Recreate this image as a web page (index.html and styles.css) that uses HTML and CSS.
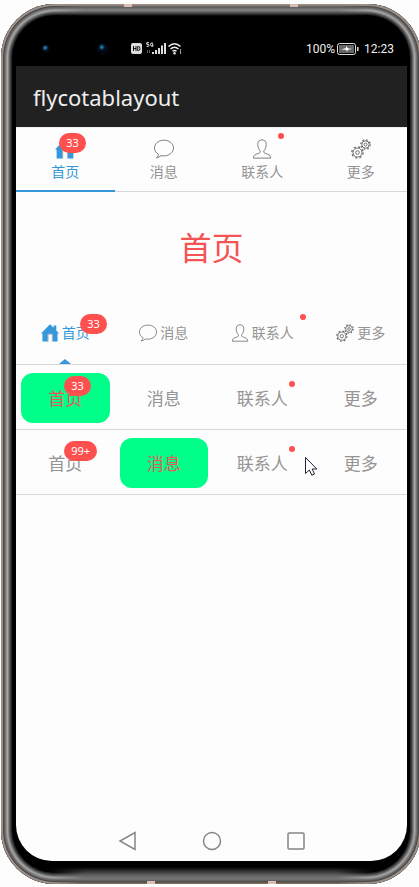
FILE: index.html
```html
<!DOCTYPE html>
<html lang="zh-CN">
<head>
<meta charset="utf-8">
<meta name="viewport" content="width=device-width, initial-scale=1">
<title>flycotablayout</title>
<link rel="stylesheet" href="styles.css">
</head>
<body>
<svg class="defs" aria-hidden="true">
  <symbol id="home" viewBox="0 0 20 20"><path fill="currentColor" d="M10 .3 14 4.300V1.800h3v5.500L20 10.500H18.400V19.500H12.600V11.500H8V19.500H1.600V10.500H0z"/><path fill="none" stroke="#a9b5bd" d="M7.700 19.500v-8.300h4.900v8.300"/></symbol>
  <symbol id="chat" viewBox="0 0 20 20"><path fill="none" stroke="currentColor" stroke-width=".9" d="M4.500 15.200C1.800 13.800.5 11.600.5 9c0-4.300 4-7.800 9.300-7.800s9.700 3.300 9.700 7.700-4.300 8-9.700 8c-1 0-1.900-.1-2.800-.3-1.200 1.200-2.800 2-4.600 2.200 1.200-.9 2-2.100 2.100-3.600z"/></symbol>
  <symbol id="person" viewBox="0 0 20 20"><path fill="none" stroke="currentColor" stroke-width=".9" d="M10 .9c-3 0-4.300 1.800-4.200 4.500.1 3 1 5.200 2.400 6.500.3 1.500-.3 2-1.600 2.500-3.100 1-5.100 1.500-5.200 4.700h17.200c-.1-3.200-2.100-3.700-5.200-4.700-1.300-.5-1.900-1-1.600-2.500 1.400-1.300 2.300-3.500 2.400-6.500C14.300 2.700 13 .9 10 .9z"/></symbol>
  <symbol id="gears" viewBox="0 0 20 20"><g fill="none" stroke="currentColor"><circle cx="6.500" cy="13.500" r="4.500"/><circle cx="6.500" cy="13.500" r="1.800"/><circle cx="6.500" cy="13.500" r="5.600" stroke-width="1.500" stroke-dasharray="2 2.400"/><circle cx="14.500" cy="5.500" r="3.700"/><circle cx="14.500" cy="5.500" r="1.500"/><circle cx="14.500" cy="5.500" r="4.700" stroke-width="1.400" stroke-dasharray="1.700 2"/></g></symbol>
</svg>
<div class="phone">
  <span class="seam seam-a"></span><span class="seam seam-b"></span><span class="seam seam-c"></span><span class="seam seam-d"></span>
  <header class="status">
    <span class="lens"></span><span class="lens lens-big"></span>
    <svg class="signals" width="52" height="14" viewBox="0 0 52 14" role="img" aria-label="HD 5G Wi-Fi">
      <rect y="1" width="11" height="11" rx="2" fill="#ddd"/>
      <path d="M2.500 4v5m2.500-5v5m-2.500-2.500h2.500M6.700 4.500v4h1q1.300 0 1.300-2t-1.300-2z" fill="none" stroke="#111"/>
      <path d="M18 .7h-2.200v1.700h1.200q1 0 1 1t-1 1h-1.300M22 1.200q-2.500-1-2.500 1.300T22 4.200V2.700h-1" fill="none" stroke="#eee"/>
      <path d="M16.500 8v3m2-3v3" stroke="#777" stroke-width=".8"/>
      <path d="M22 12v-2M25 12V8M28 12V6M31 12V3.500M34 12V1" stroke="#ddd" stroke-width="2"/>
      <path d="M37.500 4.500q6-5.500 12 0M39.500 7q4-3.500 8 0M41.500 9.300q2-1.700 4 0" fill="none" stroke="#eee" stroke-width="1.500"/><circle cx="43.500" cy="11.200" r="1.200" fill="#eee"/><path d="M49.500 7v5" stroke="#999"/>
    </svg>
    <span class="power">100%</span>
    <svg class="battery" width="22" height="12" viewBox="0 0 22 12" role="img" aria-label="充电中"><rect x=".5" y=".5" width="18" height="11" rx="2" fill="none" stroke="#ddd"/><rect x="2" y="2" width="15" height="8" fill="#666"/><path d="M4 6.500 9 5V3l2 2.200L15 6l-4 .8-1 2-1-2z" fill="#fff"/><path d="M20.800 4v4" stroke="#ddd" stroke-width="1.500"/></svg>
    <time>12:23</time>
  </header>
  <div class="screen">
    <h1 class="appbar">flycotablayout</h1>
    <div class="tabs stacked" role="tablist">
      <button class="tab active" role="tab" aria-selected="true"><svg><use href="#home"/></svg>首页<span class="badge">33</span></button>
      <button class="tab" role="tab"><svg><use href="#chat"/></svg>消息</button>
      <button class="tab" role="tab"><svg><use href="#person"/></svg>联系人<span class="dot"></span></button>
      <button class="tab" role="tab"><svg><use href="#gears"/></svg>更多</button>
    </div>
    <main class="page">首页</main>
    <div class="tabs inline" role="tablist">
      <button class="tab active" role="tab" aria-selected="true"><svg><use href="#home"/></svg>首页<span class="badge">33</span></button>
      <button class="tab" role="tab"><svg><use href="#chat"/></svg>消息</button>
      <button class="tab" role="tab"><svg><use href="#person"/></svg>联系人<span class="dot"></span></button>
      <button class="tab" role="tab"><svg><use href="#gears"/></svg>更多</button>
    </div>
    <div class="tabs block" role="tablist">
      <button class="tab active" role="tab" aria-selected="true"><span class="pill">首页</span><span class="badge">33</span></button>
      <button class="tab" role="tab"><span class="pill">消息</span></button>
      <button class="tab" role="tab"><span class="pill">联系人</span><span class="dot"></span></button>
      <button class="tab" role="tab"><span class="pill">更多</span></button>
    </div>
    <div class="tabs block" role="tablist">
      <button class="tab" role="tab"><span class="pill">首页</span><span class="badge">99+</span></button>
      <button class="tab active" role="tab" aria-selected="true"><span class="pill">消息</span></button>
      <button class="tab" role="tab"><span class="pill">联系人</span><span class="dot"></span></button>
      <button class="tab" role="tab"><span class="pill">更多</span></button>
      <svg class="cursor" width="14" height="21" viewBox="0 0 14 21" aria-hidden="true"><path d="M1.500 1.500v16l3.800-3.500 2.500 5.200 2.700-1.200L8.200 13h4.600z" fill="#fff" stroke="#223"/></svg>
    </div>
    <nav class="system">
      <button aria-label="返回"><svg viewBox="0 0 20 20"><path d="M17 1.500v17L2 10z"/></svg></button>
      <button aria-label="主页"><svg viewBox="0 0 20 20"><circle cx="10" cy="10" r="8.500"/></svg></button>
      <button aria-label="最近任务"><svg viewBox="0 0 20 20"><rect x="2" y="2" width="16" height="16" rx="1"/></svg></button>
    </nav>
  </div>
</div>
</body>
</html>
```
FILE: styles.css
```css
* { box-sizing: border-box; }
body {
  margin: 0;
  min-height: 100vh;
  padding: 4px 0 3px 1px;
  display: flex;
  overflow: hidden;
  background: #fdfdfd;
  font-family: "Noto Sans", "Noto Sans CJK SC", sans-serif;
  color: #949494;
}
button {
  margin: 0;
  padding: 0;
  border: 0;
  background: none;
  color: inherit;
  font: inherit;
}
.defs { position: absolute; width: 0; height: 0; }

.phone {
  position: relative;
  flex: 1;
  min-width: 0;
  margin-right: -2px;
  display: flex;
  flex-direction: column;
  padding: 11px 14px 23px 15px;
  border-radius: 54px;
  background: #000;
  box-shadow:
    inset 0 0 0 2px #9b8f88,
    inset 0 0 0 3px #484848,
    inset 0 0 0 4px #606060,
    inset 0 0 0 5px #747474,
    inset 0 0 0 6px #909090,
    inset 0 0 0 7px #a8a8a8,
    inset 0 0 0 8px #848484,
    inset 0 0 0 9px #606060,
    inset 0 0 0 10px #404040,
    inset 0 0 0 11px #242424;
}
.phone::before {
  content: "";
  position: absolute;
  inset: 0;
  border-radius: inherit;
  background:
    linear-gradient(#9b8d86 1px, #5a5a5a 3px, #858585 6px, #4b4b4b 9px, #000 12px) top / 100% 12px no-repeat,
    linear-gradient(#000, #303030 4px, #606060 8px, #777 12px, #4c4c4c 15px, #94765f 17px) bottom / 100% 17px no-repeat;
  mask-image: linear-gradient(90deg, transparent 48px, #000 84px, #000 calc(100% - 84px), transparent calc(100% - 48px));
}
.seam { position: absolute; width: 8px; height: 3px; background: #d8beb0; }
.seam-a { top: 0; left: 123px; }
.seam-b { top: 0; right: 123px; }
.seam-c { bottom: 0; left: 146px; }
.seam-d { bottom: 0; right: 145px; }

.status {
  position: relative;
  height: 51px;
  padding: 16px 13px 0 26px;
  display: flex;
  align-items: center;
  color: #eee;
  font: 12px/16px Roboto, sans-serif;
}
.lens {
  width: 8px;
  height: 8px;
  border-radius: 50%;
  background: radial-gradient(circle at 40% 35%, #267ba0 0 1px, #092b48 2px, #02070f 4px);
}
.lens-big { width: 12px; height: 12px; margin-left: 47px; }
.signals { margin-left: 22px; }
.power { margin-left: auto; }
.battery { margin: 0 5px 0 2px; }

.screen {
  position: relative;
  flex: 1;
  display: flex;
  flex-direction: column;
  overflow: hidden;
  border-radius: 0 0 36px 36px;
  background: #fdfdfd;
}
.appbar {
  margin: 0;
  padding: 2px 17px 0;
  background: #212121;
  color: #eee;
  font-size: 22px;
  font-weight: 400;
  line-height: 59px;
}
.tabs {
  position: relative;
  display: grid;
  grid-template-columns: repeat(4, 1fr);
  height: 65px;
  margin-right: -3px;
  border-bottom: 1px solid #d8d8d8;
}
.tab {
  position: relative;
  display: flex;
  align-items: center;
  justify-content: center;
  font-size: 14px;
  line-height: 20px;
}
.tab svg { width: 20px; height: 20px; color: #707070; }
.tab.active, .tab.active svg { color: #3498db; }
.stacked .tab { flex-direction: column; gap: 3px; padding-top: 2px; }
.stacked .active svg { width: 22px; }
.stacked { border-top: 1px solid #eee; }
.stacked .active::after {
  content: "";
  position: absolute;
  inset: auto 0 -1px;
  height: 2px;
  background: #3498db;
}
.inline .tab { gap: 3px; padding-top: 2px; }
.inline svg { width: 18px; height: 18px; }
.inline .active::after {
  content: "";
  position: absolute;
  bottom: 0;
  left: calc(50% - 6px);
  border: 6px solid transparent;
  border-top: 0;
  border-bottom: 5px solid #3498db;
}
.page {
  height: 108px;
  color: #f55454;
  font-size: 32px;
  line-height: 112px;
  text-align: center;
}
.block .tab { padding: 8px 5px 6px; font-size: 17px; align-items: stretch; }
.pill {
  flex: 1;
  display: flex;
  align-items: center;
  justify-content: center;
  padding-top: 1px;
  border-radius: 12px;
}
.block .active .pill { background: #00ff88; color: #e35858; }
.badge {
  position: absolute;
  top: 5px;
  left: calc(50% - 6px);
  min-width: 26px;
  height: 20px;
  padding: 0 7px;
  border-radius: 10px;
  background: #ff5050;
  color: #fff;
  font-size: 11px;
  line-height: 20px;
}
.dot {
  position: absolute;
  top: 5px;
  left: calc(50% + 16px);
  width: 6px;
  height: 6px;
  border-radius: 50%;
  background: #ff5050;
}
.inline .badge { top: 14px; left: calc(50% + 15px); }
.inline .dot { top: 14px; left: calc(50% + 38px); }
.block .badge { top: 11px; left: calc(50% - 1px); }
.block .dot { top: 16px; left: calc(50% + 27px); }
.cursor { position: absolute; top: 26px; left: 73%; }
.system {
  margin-top: auto;
  height: 40px;
  display: flex;
  align-items: center;
  justify-content: center;
  gap: 64px;
}
.system button, .system svg { display: block; width: 20px; height: 20px; }
.system svg { fill: none; stroke: #858585; stroke-width: 1.5; }
```
